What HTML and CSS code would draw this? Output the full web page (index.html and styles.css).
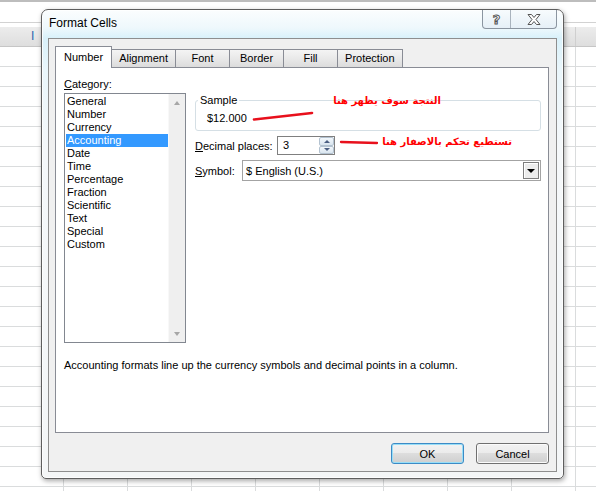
FILE: index.html
```html
<!DOCTYPE html>
<html lang="en">
<head>
  <meta charset="UTF-8" />
  <title>Format Cells</title>
  <link rel="stylesheet" href="styles.css">
</head>
<body>
  <div class="sheet">
    <div class="sheet-top"></div>
    <div class="sheet-head"><span class="col-i">I</span></div>
    <div class="sheet-grid"></div>
  </div>

  <div class="dialog">
    <div class="titlebar">
      <span class="title">Format Cells</span>
      <div class="caption-btns">
        <span class="cap-btn help">?</span>
        <span class="cap-btn close">
          <svg width="14" height="11" viewBox="0 0 14 11">
            <polygon points="1,0.5 4.5,0.5 7,3.5 9.5,0.5 13,0.5 9,5.5 13,10.5 9.5,10.5 7,7.5 4.5,10.5 1,10.5 5,5.5" fill="#fff" stroke="#555" stroke-width="1" stroke-linejoin="round"/>
          </svg>
        </span>
      </div>
    </div>

    <div class="client">
      <div class="tabs">
        <span class="tab active">Number</span>
        <span class="tab">Alignment</span>
        <span class="tab">Font</span>
        <span class="tab">Border</span>
        <span class="tab">Fill</span>
        <span class="tab">Protection</span>
      </div>

      <div class="panel">
        <div class="cols">
          <div class="cat-col">
            <div class="lbl"><u>C</u>ategory:</div>
            <div class="listbox">
              <ul class="items">
                <li>General</li>
                <li>Number</li>
                <li>Currency</li>
                <li class="sel">Accounting</li>
                <li>Date</li>
                <li>Time</li>
                <li>Percentage</li>
                <li>Fraction</li>
                <li>Scientific</li>
                <li>Text</li>
                <li>Special</li>
                <li>Custom</li>
              </ul>
              <div class="vscroll">
                <span class="arr up"></span>
                <span class="arr down"></span>
              </div>
            </div>
          </div>

          <div class="opts-col">
            <fieldset class="sample">
              <legend>Sample</legend>
              <div class="sample-val">$12.000</div>
            </fieldset>
            <div class="opt-row">
              <label class="lbl-dec"><u>D</u>ecimal places:</label>
              <div class="spin">
                <span class="spin-val">3</span>
                <div class="spin-btns">
                  <span class="sb up"></span>
                  <span class="sb down"></span>
                </div>
              </div>
            </div>
            <div class="opt-row">
              <label class="lbl-sym"><u>S</u>ymbol:</label>
              <div class="combo">
                <span>$ English (U.S.)</span>
                <span class="drop"></span>
              </div>
            </div>
          </div>
        </div>
        <p class="desc">Accounting formats line up the currency symbols and decimal points in a column.</p>
      </div>

      <div class="buttons">
        <button class="btn default">OK</button>
        <button class="btn">Cancel</button>
      </div>
    </div>
  </div>

  <!-- notas en rojo -->
  <svg class="marks" width="596" height="491">
    <line x1="254" y1="119.5" x2="312" y2="113" stroke="#e8101c" stroke-width="2.6" stroke-linecap="round"/>
    <line x1="341" y1="142" x2="377" y2="143" stroke="#e8101c" stroke-width="2.3" stroke-linecap="round"/>
  </svg>
  <span class="note note-1">النتجة سوف يظهر هنا</span>
  <span class="note note-2">تستطيع تحكم بالاصفار هنا</span>
</body>
</html>
```

FILE: styles.css
```css
body {
  margin: 0;
  width: 596px;
  height: 491px;
  overflow: hidden;
  position: relative;
  background: #fff;
  font-family: "Liberation Sans", Arial, sans-serif;
  font-size: 11px;
  color: #000;
}

/* hoja de calculo de fondo */
.sheet-top {
  height: 20px;
  border-top: 2px solid #bdbdbd;
  border-bottom: 1px solid #d2d2d2;
}
.sheet-head {
  margin-top: 4px;
  height: 19px;
  border-bottom: 1px solid #c6c6c6;
  background-image:
    repeating-linear-gradient(to right, transparent 0 63px, #cfcfcf 63px 64px),
    linear-gradient(#ececec, #dedede);
}
.col-i {
  display: block;
  padding-left: 31px;
  font-size: 12px;
  line-height: 19px;
  color: #2a66b0;
}
.sheet-grid {
  height: 444px;
  background-image:
    repeating-linear-gradient(to bottom, transparent 0 19px, #dadcdd 19px 20px),
    repeating-linear-gradient(to right, transparent 0 63px, #dadcdd 63px 64px);
}

/* ventana */
.dialog {
  position: absolute;
  left: 41px;
  top: 9px;
  width: 523px;
  height: 470px;
  box-sizing: border-box;
  border: 1px solid #5e5e5e;
  border-radius: 7px 7px 5px 5px;
  padding: 0 6px 6px;
  display: flex;
  flex-direction: column;
  background: linear-gradient(to bottom, #fbfdfe 0, #eef8fc 18px, #d9f1fa 28px, #eaf6fb 60px, #f5f8fa 140px, #f4f6f7 100%);
  box-shadow: 1px 2px 5px rgba(0, 0, 0, 0.35), inset 0 0 0 1px rgba(255, 255, 255, 0.8);
}
.titlebar {
  height: 28px;
  display: flex;
  justify-content: space-between;
  align-items: flex-start;
}
.title {
  font-size: 12px;
  line-height: 15px;
  margin: 6px 0 0 1px;
}
.caption-btns {
  display: flex;
  height: 18px;
  border: 1px solid #8b95a0;
  border-top: none;
  border-radius: 0 0 4px 4px;
  background: linear-gradient(#f7fbfd, #e6f0f7);
}
.cap-btn {
  display: flex;
  align-items: center;
  justify-content: center;
}
.help {
  width: 27px;
  border-right: 1px solid #a9b3bd;
  font-family: "DejaVu Sans", sans-serif;
  font-weight: bold;
  font-size: 13px;
  color: #fff;
  -webkit-text-stroke: 1px #555;
}
.close {
  width: 45px;
}

.client {
  flex: 1;
  border: 1px solid #8e8e8e;
  background: #f0f0f0;
  padding: 7px 7px 7px 6px;
  display: flex;
  flex-direction: column;
}

/* pestañas */
.tabs {
  display: flex;
  align-items: flex-end;
  height: 21px;
  padding-left: 3px;
  position: relative;
  z-index: 1;
}
.tab {
  height: 18px;
  box-sizing: border-box;
  min-width: 55px;
  padding: 0 7px;
  margin-left: -1px;
  border: 1px solid #898c95;
  border-bottom: none;
  text-align: center;
  line-height: 17px;
  background: linear-gradient(#f4f4f4, #e9e9e9 50%, #dcdcdc);
}
.tab.active {
  height: 22px;
  margin: 0 0 0 -3px;
  padding: 2px 8px 0;
  position: relative;
  top: 1px;
  z-index: 2;
  background: #fff;
}

.panel {
  flex: 1;
  border: 1px solid #898c95;
  background: #fff;
  padding: 10px 7px 0 8px;
}
.cols {
  display: grid;
  grid-template-columns: 122px 1fr;
  column-gap: 9px;
}
.lbl {
  line-height: 13px;
}
.listbox {
  margin-top: 2px;
  height: 250px;
  box-sizing: border-box;
  border: 1px solid #828790;
  display: flex;
}
.items {
  flex: 1;
  list-style: none;
  margin: 0;
  padding: 1px 0 0;
}
.items li {
  line-height: 13px;
  margin-left: 1px;
  padding-left: 1px;
}
.items li.sel {
  background: #3399ff;
  color: #fff;
}
.vscroll {
  width: 17px;
  background: #efefef;
  border-left: 1px solid #f8f8f8;
  box-sizing: border-box;
  display: flex;
  flex-direction: column;
  justify-content: space-between;
  align-items: center;
}
.arr {
  width: 0;
  height: 0;
  border-left: 3.5px solid transparent;
  border-right: 3.5px solid transparent;
}
.arr.up {
  margin-top: 7px;
  border-bottom: 4px solid #a6a6a6;
}
.arr.down {
  margin-bottom: 6px;
  border-top: 4px solid #a6a6a6;
}

.opts-col {
  padding-top: 16px;
}
.sample {
  margin: 0;
  padding: 0 0 5px 11px;
  border: 1px solid #d5dfe5;
  border-radius: 3px;
}
.sample legend {
  padding: 0 2px;
  margin-left: -9px;
  line-height: 13px;
}
.sample-val {
  margin-top: 5px;
  line-height: 13px;
}
.opt-row {
  display: flex;
  align-items: center;
  margin-top: 5px;
}
.lbl-dec {
  width: 82px;
}
.lbl-sym {
  width: 47px;
}
.spin {
  width: 58px;
  height: 19px;
  box-sizing: border-box;
  border: 1px solid #7f7f7f;
  display: flex;
  justify-content: space-between;
  background: #fff;
}
.spin-val {
  padding-left: 5px;
  line-height: 17px;
}
.spin-btns {
  width: 15px;
  display: flex;
  flex-direction: column;
}
.sb {
  flex: 1;
  border: 1px solid #b3c2d0;
  border-radius: 2px;
  background: linear-gradient(#f3f8fc, #d9e5ef);
  display: flex;
  align-items: center;
  justify-content: center;
}
.sb::after {
  content: "";
  border-left: 3px solid transparent;
  border-right: 3px solid transparent;
}
.sb.up::after {
  border-bottom: 3px solid #4b5f82;
}
.sb.down::after {
  border-top: 3px solid #4b5f82;
}
.combo {
  flex: 1;
  height: 21px;
  box-sizing: border-box;
  border: 1px solid #a3a3a3;
  padding: 0 1px 0 3px;
  display: flex;
  align-items: center;
  justify-content: space-between;
}
.drop {
  width: 16px;
  height: 17px;
  box-sizing: border-box;
  border: 1px solid #7d7d7d;
  box-shadow: inset 1px 1px 0 #fff;
  background: #ececec;
  display: flex;
  align-items: center;
  justify-content: center;
}
.drop::after {
  content: "";
  border-left: 4px solid transparent;
  border-right: 4px solid transparent;
  border-top: 4px solid #000;
}

.desc {
  margin: 16px 0 0;
  line-height: 13px;
}

.buttons {
  display: flex;
  justify-content: flex-end;
  gap: 12px;
  margin-top: 10px;
}
.btn {
  width: 73px;
  height: 21px;
  border: 1px solid #707070;
  border-radius: 3px;
  background: linear-gradient(#f2f2f2, #ebebeb 50%, #dddddd 50%, #cfcfcf);
  box-shadow: inset 0 0 0 1px #fbfbfb;
  font-family: "Liberation Sans", Arial, sans-serif;
  font-size: 11px;
  color: #000;
  padding: 0;
}
.btn.default {
  border-color: #3c8bc6;
  box-shadow: inset 0 0 0 1px #98def7;
}

/* anotaciones */
.marks {
  position: absolute;
  left: 0;
  top: 0;
  pointer-events: none;
}
.note {
  position: absolute;
  color: #f00;
  font-family: "DejaVu Sans", sans-serif;
  font-weight: bold;
  font-size: 10px;
  line-height: 14px;
  direction: rtl;
  white-space: nowrap;
}
.note-1 {
  right: 155px;
  top: 94px;
}
.note-2 {
  right: 84px;
  top: 135px;
}
```
